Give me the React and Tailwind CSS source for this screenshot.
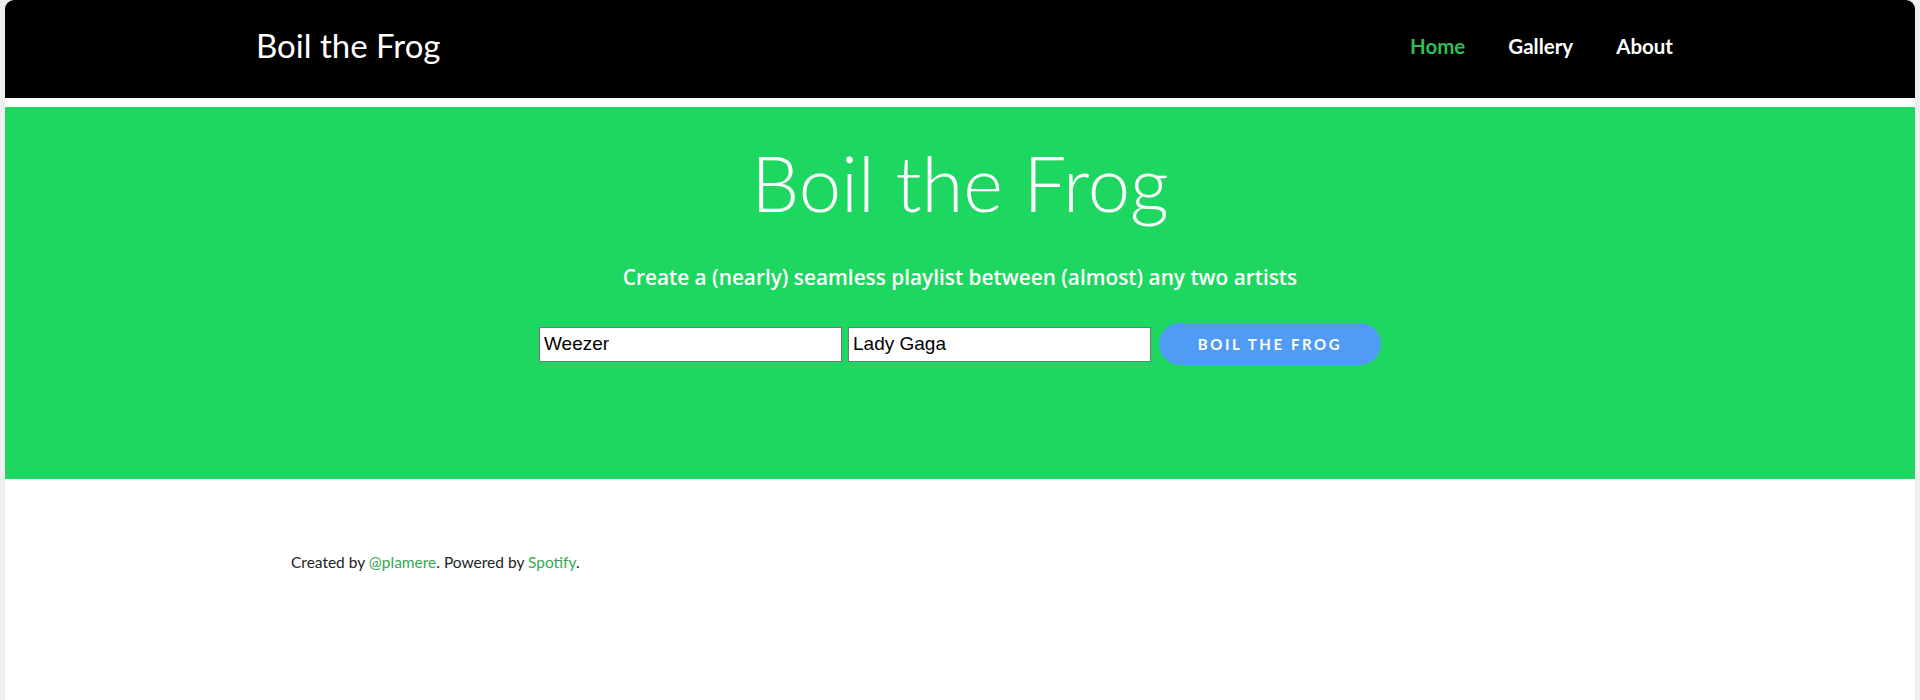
import React, { useState } from 'react';

const App = () => {
    const [from, setFrom] = useState('Weezer');
    const [to, setTo] = useState('Lady Gaga');

    return (
        <div className="h-[700px] bg-[#efefef] px-[5px] font-['Lato',sans-serif]">
            <div className="h-full bg-white rounded-t-[9px] overflow-hidden flex flex-col">
                {/* navbar */}
                <nav className="h-[98px] bg-black flex items-center justify-between pl-[251px] pr-[242px] pb-[5px]">
                    <a href="#" className="text-white text-[33px] leading-none pb-[2px]">Boil the Frog</a>
                    <div className="flex items-center gap-[43px] text-[20.5px] font-bold">
                        <a href="#" className="text-[#2ebd59]">Home</a>
                        <a href="#" className="text-white">Gallery</a>
                        <a href="#" className="text-white">About</a>
                    </div>
                </nav>

                {/* hero */}
                <section className="mt-[9px] h-[372px] bg-[#1ed760] flex flex-col items-center pt-[38px] text-white">
                    <h1 className="text-[76px] font-light leading-none">Boil the Frog</h1>
                    <p className="mt-[42px] text-[20.8px] leading-[28px] font-semibold font-['Open_Sans',sans-serif]">
                        Create a (nearly) seamless playlist between (almost) any two artists
                    </p>
                    <form className="mt-[32px] flex items-center" onSubmit={(e) => e.preventDefault()}>
                        <input
                            type="text"
                            value={from}
                            onChange={(e) => setFrom(e.target.value)}
                            className="w-[303px] h-[35px] bg-white border border-[#767676] px-[4px] text-[19px] text-black font-['Liberation_Sans',sans-serif] outline-none"
                        />
                        <input
                            type="text"
                            value={to}
                            onChange={(e) => setTo(e.target.value)}
                            className="ml-[6px] w-[303px] h-[35px] bg-white border border-[#767676] px-[4px] text-[19px] text-black font-['Liberation_Sans',sans-serif] outline-none"
                        />
                        <button type="submit" className="ml-[8px] w-[222px] h-[42px] rounded-full bg-[#509bf5] text-white text-[15px] font-bold tracking-[2.6px] uppercase">
                            Boil the Frog
                        </button>
                    </form>
                </section>

                {/* footer */}
                <footer className="pt-[73px] pl-[286px] text-[15.5px] leading-[20px] text-[#222]">
                    Created by <a href="#" className="text-[#34a853]">@plamere</a>. Powered by <a href="#" className="text-[#34a853]">Spotify</a>.
                </footer>
            </div>
        </div>
    );
};

export default App;
